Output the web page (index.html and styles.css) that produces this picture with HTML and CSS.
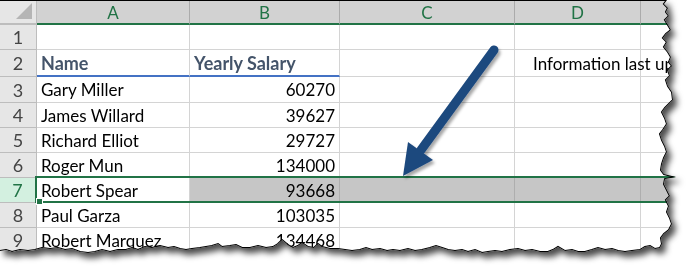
FILE: index.html
```html
<!DOCTYPE html>
<html lang="en">
<head>
  <meta charset="UTF-8">
  <meta name="viewport" content="width=device-width, initial-scale=1.0">
  <title>Salaries</title>
  <link rel="stylesheet" href="styles.css">
</head>
<body>

  <div class="torn-shadow">
    <div class="sheet">

      <div class="grid">
        <!-- шапка колонок -->
        <div class="corner"><span class="corner-tri"></span></div>
        <div class="col-head">A</div>
        <div class="col-head">B</div>
        <div class="col-head">C</div>
        <div class="col-head">D</div>
        <div class="col-head last"></div>

        <div class="row-head">1</div>
        <div class="cell"></div><div class="cell"></div><div class="cell"></div><div class="cell"></div><div class="cell last"></div>

        <div class="row-head tall">2</div>
        <div class="cell tall title">Name</div>
        <div class="cell tall title">Yearly Salary</div>
        <div class="cell tall"></div>
        <div class="cell tall note">Information last updated</div>
        <div class="cell tall last"></div>

        <div class="row-head tall">3</div>
        <div class="cell tall">Gary Miller</div><div class="cell tall num">60270</div><div class="cell tall"></div><div class="cell tall"></div><div class="cell tall last"></div>

        <div class="row-head">4</div>
        <div class="cell">James Willard</div><div class="cell num">39627</div><div class="cell"></div><div class="cell"></div><div class="cell last"></div>

        <div class="row-head">5</div>
        <div class="cell">Richard Elliot</div><div class="cell num">29727</div><div class="cell"></div><div class="cell"></div><div class="cell last"></div>

        <div class="row-head">6</div>
        <div class="cell">Roger Mun</div><div class="cell num">134000</div><div class="cell"></div><div class="cell"></div><div class="cell last"></div>

        <div class="row-head picked">7</div>
        <div class="cell">Robert Spear</div><div class="cell num gray">93668</div><div class="cell gray"></div><div class="cell gray"></div><div class="cell gray last"></div>

        <div class="row-head">8</div>
        <div class="cell">Paul Garza</div><div class="cell num">103035</div><div class="cell"></div><div class="cell"></div><div class="cell last"></div>

        <div class="row-head">9</div>
        <div class="cell">Robert Marquez</div><div class="cell num">134468</div><div class="cell"></div><div class="cell"></div><div class="cell last"></div>
      </div>

      <!-- рамка выделенной строки -->
      <div class="selection"><span class="handle"></span></div>

      <svg class="arrow" viewBox="0 0 694 274" width="694" height="274">
        <defs>
          <filter id="arrowShadow" x="-20%" y="-20%" width="140%" height="140%">
            <feDropShadow dx="2" dy="3" stdDeviation="1.5" flood-color="#000" flood-opacity="0.35"/>
          </filter>
        </defs>
        <g filter="url(#arrowShadow)" fill="#1f4a7e">
          <line x1="494" y1="50" x2="421" y2="150" stroke="#1f4a7e" stroke-width="9" stroke-linecap="round"/>
          <polygon points="403,176 408,142 433,160"/>
        </g>
      </svg>

      <svg class="edge" viewBox="0 0 694 274" width="694" height="274">
        <polyline id="edgeLine" fill="none" stroke="#000" stroke-width="2" points=""/>
      </svg>
    </div>
  </div>

  <script>
    // рваный край листа: одна и та же линия для обрезки и для контура
    const tear = [
      [0,0],[667,0],[664,4],[668,8],[666,12],[669,16],[665,20],[668,25],[671,30],[666,34],[663,38],
      [667,42],[664,47],[668,52],[671,57],[669,62],[672,66],[668,70],[670,76],[666,80],[668,86],
      [672,92],[673,100],[669,104],[665,108],[662,112],[665,118],[667,124],[663,130],[660,134],
      [662,140],[665,146],[667,152],[664,158],[662,164],[661,170],[664,174],[676,177],[665,179],
      [664,184],[667,190],[670,196],[666,200],[669,206],[667,212],[670,218],[672,224],[669,230],
      [664,234],[661,238],[662,244],[660,248],[655,249],[650,246],[645,247],[640,250],[632,251],
      [625,252],[618,251],[612,249],[605,250],[598,248],[592,250],[585,252],[578,252],[572,250],
      [565,251],[558,247],[553,250],[548,252],[540,252],[532,250],[525,251],[518,249],[510,250],
      [502,252],[495,251],[488,252],[482,253],[475,250],[468,252],[462,250],[455,251],[448,250],
      [442,248],[436,246],[430,248],[422,250],[415,251],[408,249],[400,251],[393,250],[387,251],
      [380,249],[372,250],[366,248],[360,250],[352,251],[345,250],[338,249],[330,249],[322,247],
      [318,244],[314,248],[308,247],[302,243],[298,246],[293,248],[288,245],[282,240],[278,244],
      [273,247],[266,248],[258,246],[250,248],[242,248],[236,245],[230,246],[222,247],[218,244],
      [212,246],[206,247],[200,248],[192,249],[186,250],[180,249],[174,247],[168,248],[160,246],
      [152,248],[145,247],[138,250],[132,248],[126,250],[118,250],[110,252],[102,250],[95,252],
      [88,253],[80,252],[72,249],[65,250],[58,248],[50,249],[42,248],[35,250],[28,251],[20,250],
      [12,252],[6,250],[0,251]
    ];

    document.querySelector('.sheet').style.clipPath =
      'polygon(' + tear.map(p => p[0] + 'px ' + p[1] + 'px').join(', ') + ')';
    document.getElementById('edgeLine').setAttribute('points',
      tear.map(p => p.join(',')).join(' '));
  </script>
</body>
</html>
```

FILE: styles.css
```css
html, body {
  margin: 0;
  padding: 0;
  background: #fff;
}

body {
  width: 694px;
  height: 274px;
  overflow: hidden;
  font-family: Lato, "Open Sans", sans-serif;
}

.torn-shadow {
  width: 694px;
  height: 274px;
  filter: drop-shadow(4px 5px 3px rgba(0, 0, 0, 0.7));
}

.sheet {
  position: relative;
  width: 694px;
  height: 274px;
  background: #fff;
  overflow: hidden;
}

.grid {
  display: grid;
  grid-template-columns: 37px 153px 150px 175px 126px 1fr;
  grid-template-rows: 25px 25px 27px 26px repeat(6, 25px);
  font-size: 17px;
  color: #000;
}

.grid > div {
  box-sizing: border-box;
  white-space: nowrap;
  display: flex;
  align-items: center;
}

.corner {
  background: #e6e6e6;
  border-right: 1px solid #bdbdbd;
  border-bottom: 2px solid #bdbdbd;
  position: relative;
}

.corner-tri {
  position: absolute;
  right: 4px;
  bottom: 4px;
  width: 0;
  height: 0;
  border-left: 16px solid transparent;
  border-bottom: 16px solid #b5b5b5;
}

.col-head {
  background: #d2d2d2;
  color: #217346;
  justify-content: center;
  border-right: 1px solid #ababab;
  border-bottom: 2px solid #217346;
  padding-top: 1px;
}

.row-head {
  background: #e6e6e6;
  color: #444;
  font-size: 18px;
  justify-content: center;
  border-right: 1px solid #bdbdbd;
  border-bottom: 1px solid #bdbdbd;
}

.row-head.picked {
  background: #d3f0e0;
  color: #217346;
  border-right: 2px solid #217346;
}

.cell {
  border-right: 1px solid #d4d4d4;
  border-bottom: 1px solid #d4d4d4;
  padding: 0 4px;
  overflow: visible;
}

.cell.last,
.col-head.last {
  border-right: none;
}

.cell.title {
  font-size: 18px;
  font-weight: bold;
  color: #44546a;
  border-bottom: 2px solid #4472c4;
}

.cell.num {
  justify-content: flex-end;
}

.cell.gray {
  background: #c6c6c6;
  border-right-color: #aeaeae;
}

.cell.note {
  padding-left: 18px;
  position: relative;
  z-index: 1;
}

.selection {
  position: absolute;
  left: 35px;
  top: 176px;
  width: 680px;
  height: 27px;
  box-sizing: border-box;
  border: 2px solid #217346;
}

.handle {
  position: absolute;
  left: -1px;
  bottom: -4px;
  width: 5px;
  height: 5px;
  background: #217346;
  border: 1px solid #fff;
}

.arrow,
.edge {
  position: absolute;
  left: 0;
  top: 0;
  pointer-events: none;
}
```
